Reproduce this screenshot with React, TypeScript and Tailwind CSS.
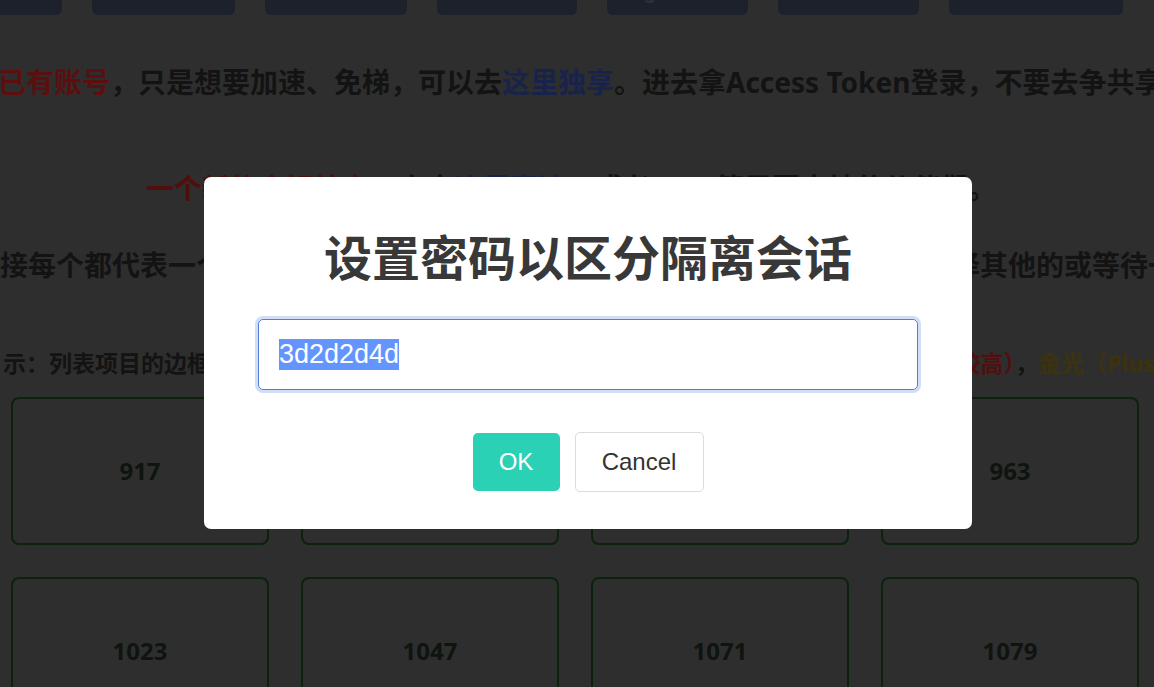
import React from 'react';

const topButtons = [
  { w: 'w-[141px]', label: '首页' },
  { w: 'w-[143px]', label: '使用说明' },
  { w: 'w-[142px]', label: '账号列表' },
  { w: 'w-[140px]', label: '获取帮助' },
  { w: 'w-[141px]', label: 'Tg 交流群' },
  { w: 'w-[141px]', label: '注册账号' },
  { w: 'w-[174px]', label: '独享服务' },
];

const cards = ['917', '931', '947', '963', '1023', '1047', '1071', '1079'];

export default function App() {
  return (
    <div className="relative h-[687px] w-full overflow-hidden bg-[#2e2e2e] font-['Noto_Sans','Noto_Sans_CJK_SC',sans-serif] font-bold text-[#131313]">
      {/* Nav buttons, page is scrolled so only their bottoms show */}
      <div className="-mt-[25px] -ml-[79px] flex gap-[30px]">
        {topButtons.map((b) => (
          <div
            key={b.label}
            className={`${b.w} flex h-[40px] shrink-0 items-start justify-center rounded-md bg-[#1c212c] pt-[1px] text-[20px] text-[#2c313b]`}
          >
            {b.label}
          </div>
        ))}
      </div>

      <div className="mt-[47px] -ml-[2px] whitespace-nowrap text-[28px] leading-[40px]">
        <span className="text-[#5c0f0f]">已有账号</span>，只是想要加速、免梯，可以去
        <span className="text-[#18234b]">这里独享</span>。进去拿Access Token登录，不要去争共享
      </div>

      <div className="mt-[66px] whitespace-nowrap pr-[12px] text-center text-[28px] leading-[40px]">
        <span className="text-[#520d0d]">一个新的全好站点</span>，点击
        <span className="text-[#18234b]">这里直达</span>，或者Kuro等需要支持的伙伴们。
      </div>

      <div className="mt-[37px] whitespace-nowrap text-[28px] leading-[40px]">
        接每个都代表一个独立的共享账号，点击即可直接使用，如果遇到繁忙可以选择其他的或等待一会儿
      </div>

      <div className="mt-[62px] ml-[3px] whitespace-nowrap text-[23px] leading-[32px]">
        示：列表项目的边框颜色代表不同状态，绿色（空闲可用），
        <span className="text-[#520f0f]">红色（当前非常繁忙，使用的人数较高）</span>，
        <span className="text-[#3e320a]">金光（Plus账号）</span>
      </div>

      <div className="mt-[18px] ml-[11px] grid w-[1128px] grid-cols-4 gap-[32px]">
        {cards.map((n) => (
          <div
            key={n}
            className="flex h-[148px] items-center justify-center rounded-lg border-2 border-[#0b220d] text-[24px] text-[#0e140e]"
          >
            {n}
          </div>
        ))}
      </div>

      {/* Password dialog */}
      <div className="absolute left-[204px] top-[177px] flex h-[352px] w-[768px] flex-col items-center rounded-[7px] bg-white pt-[48px] font-normal">
        <h2 className="font-['Noto_Sans_CJK_SC',sans-serif] text-[48px] font-bold leading-[60px] text-[#383838]">
          设置密码以区分隔离会话
        </h2>
        <div className="mt-[34px] flex h-[71px] w-[660px] items-center rounded-[5px] border border-[#557ed8] pl-[20px] font-['Liberation_Sans',Arial,sans-serif] text-[27px] leading-[31px] shadow-[0_0_0_3px_#d2def8]">
          <span className="bg-[#6495ff] text-white">3d2d2d4d</span>
        </div>
        <div className="mt-[42px] flex items-center gap-[15px] font-['Liberation_Sans',Arial,sans-serif] text-[24px]">
          <button className="h-[58px] w-[87px] rounded-[5px] bg-[#2bd1b4] text-white">OK</button>
          <button className="h-[60px] w-[129px] rounded-[5px] border border-[#dcdcdc] bg-white text-[#333]">
            Cancel
          </button>
        </div>
      </div>
    </div>
  );
}
